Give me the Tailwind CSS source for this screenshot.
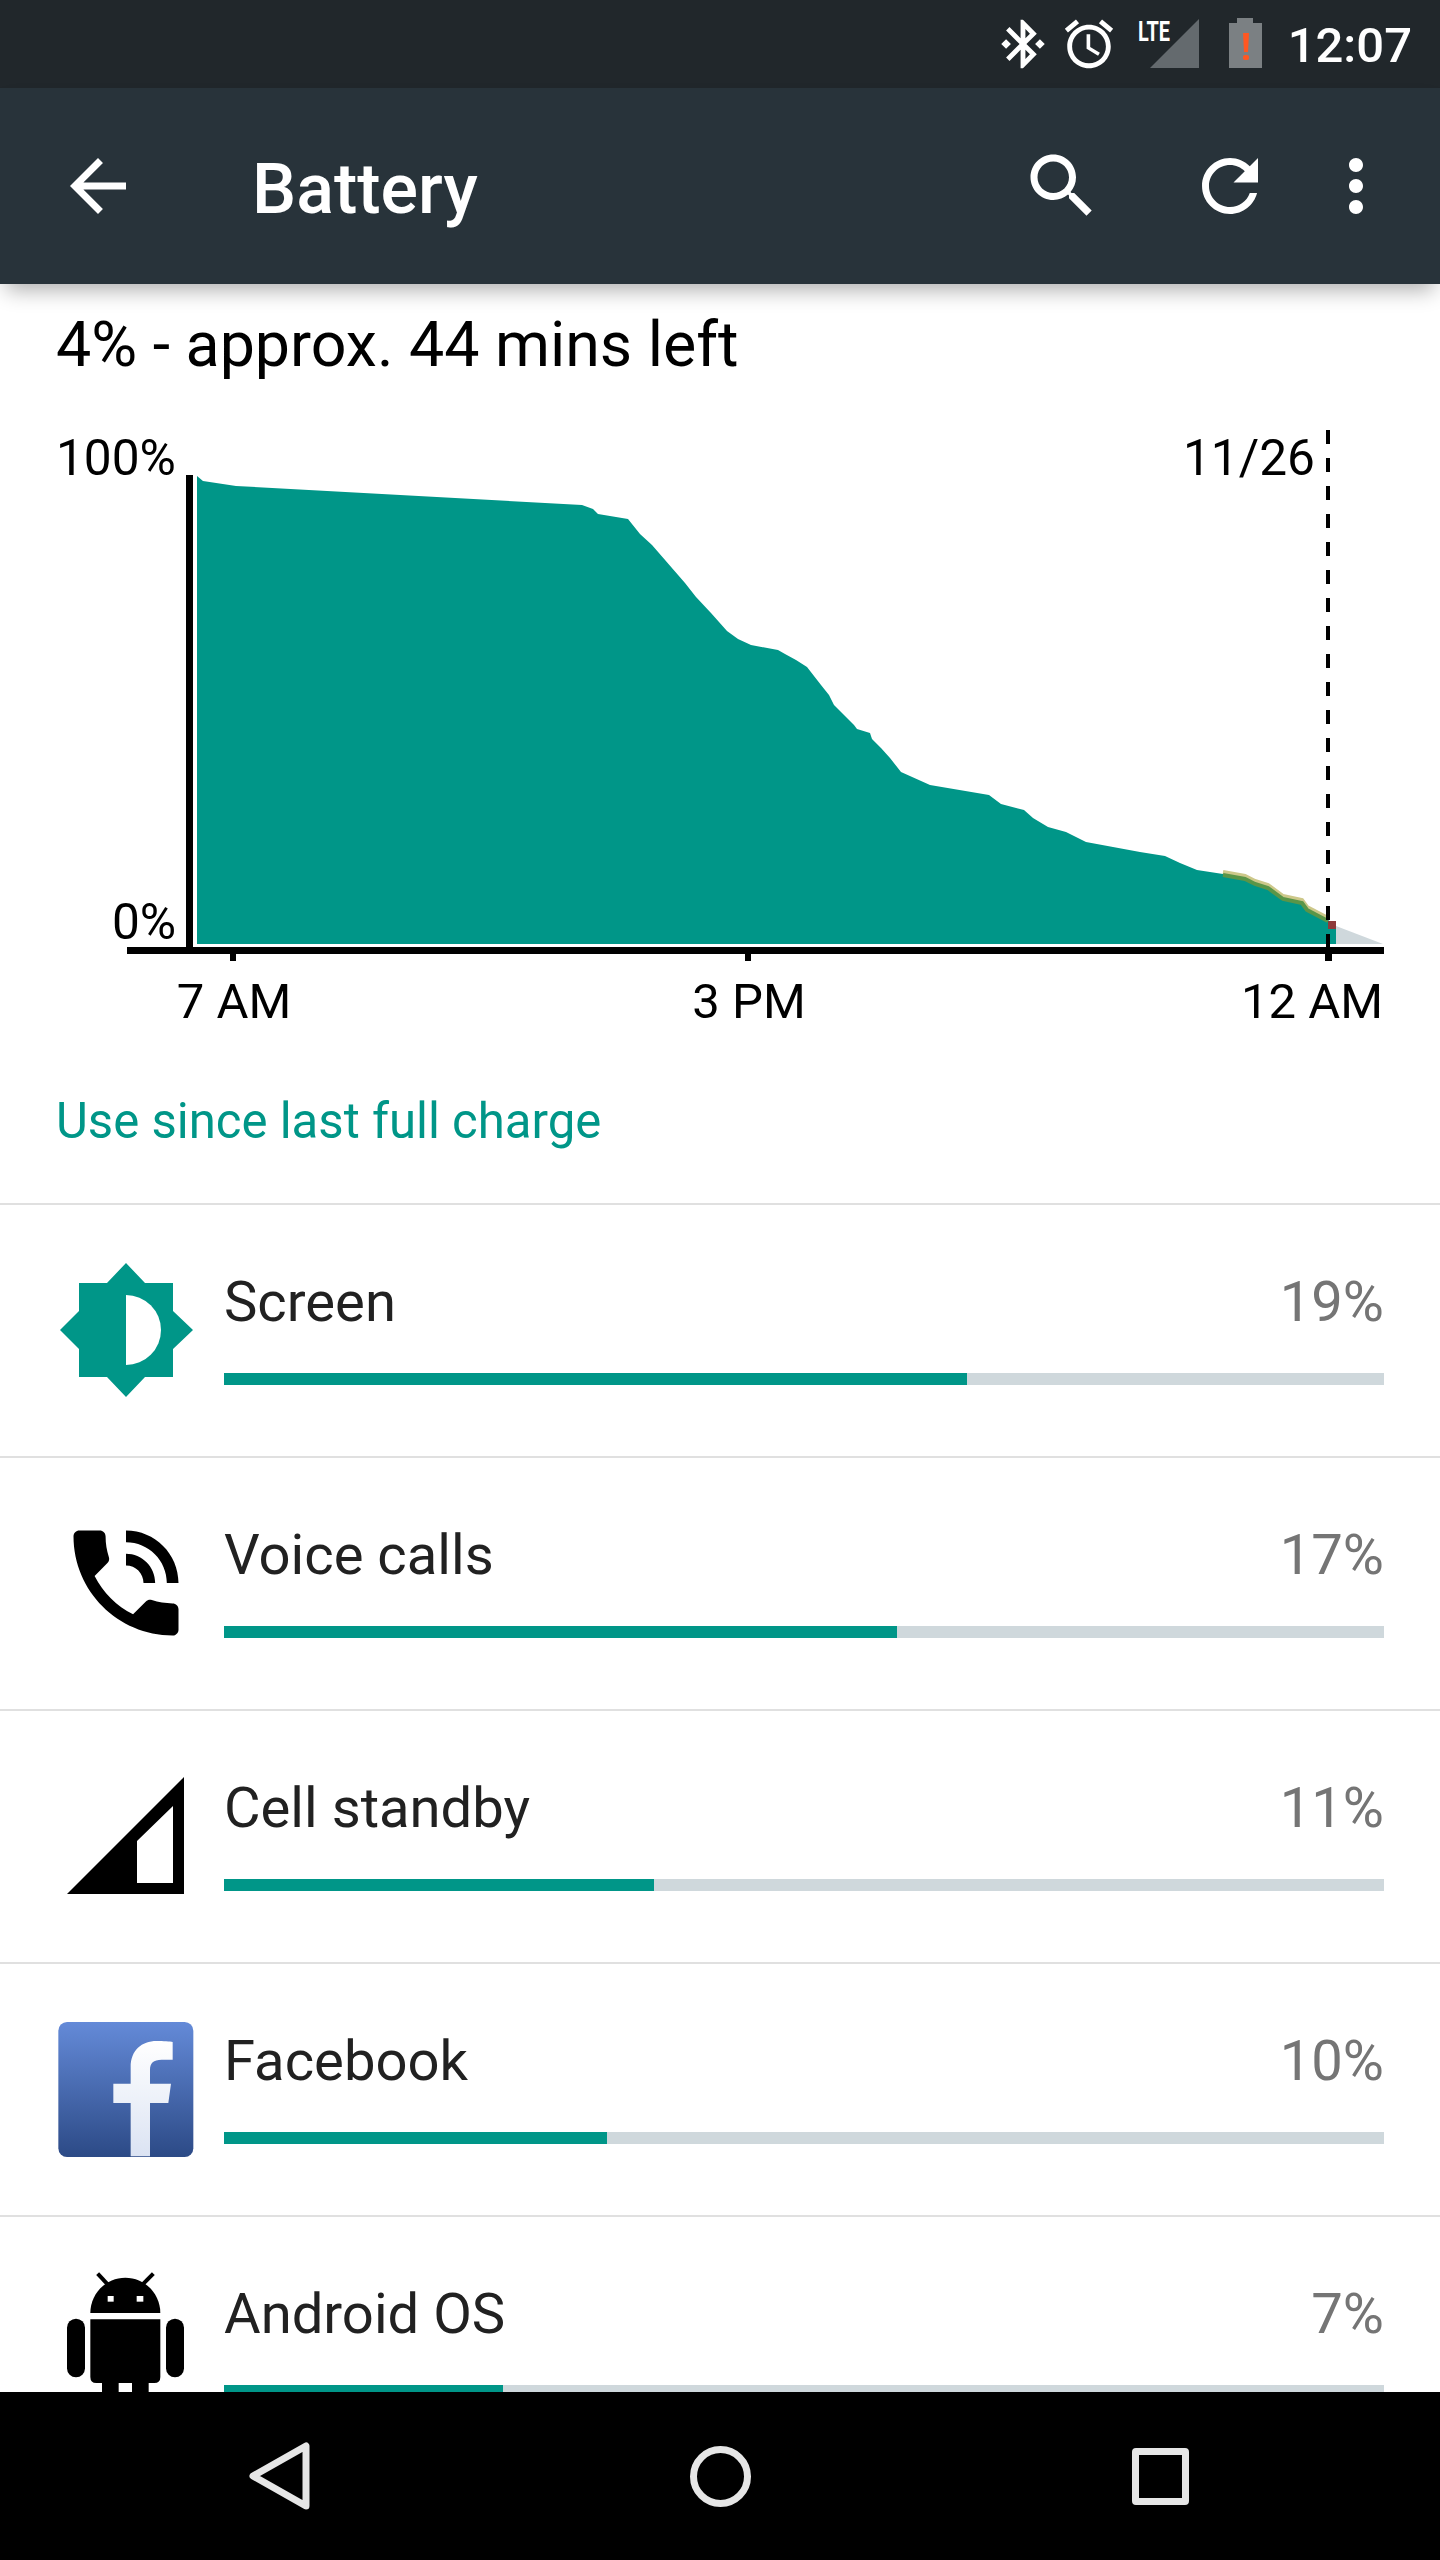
<!DOCTYPE html>
<html lang="en">
<head>
    <meta charset="UTF-8">
    <meta name="viewport" content="width=device-width, initial-scale=1.0">
    <title>Battery</title>
    <script src="https://cdn.jsdelivr.net/npm/@tailwindcss/browser@4"></script>
</head>
<body class="bg-white font-[Roboto,sans-serif]">
    <div class="w-[1440px] h-[2560px] flex flex-col overflow-hidden">

        <!-- status bar -->
        <div class="h-[88px] shrink-0 bg-[#21272b] relative">
            <svg class="absolute left-[994px] top-[15px] w-[58px] h-[58px]" viewBox="0 0 24 24" fill="#fff"><path d="M7 12l-2-2-2 2 2 2 2-2zm10.71-4.29L12 2h-1v7.59L6.41 5 5 6.41 10.59 12 5 17.59 6.41 19 11 14.41V22h1l5.71-5.71-4.3-4.29 4.3-4.29zM13 5.83l1.88 1.88L13 9.59V5.83zm1.88 10.46L13 18.17v-3.76l1.88 1.88zM19 10l-2 2 2 2 2-2-2-2z"/></svg>
            <svg class="absolute left-[1060px] top-[15px] w-[58px] h-[58px]" viewBox="0 0 24 24" fill="#fff"><path d="M22 5.72l-4.6-3.86-1.29 1.53 4.6 3.86L22 5.72zM7.88 3.39L6.6 1.86 2 5.71l1.29 1.53 4.59-3.85zM12.5 8H11v6l4.75 2.85.75-1.23-4-2.37V8zM12 4c-4.97 0-9 4.03-9 9s4.02 9 9 9c4.97 0 9-4.03 9-9s-4.03-9-9-9zm0 16c-3.87 0-7-3.13-7-7s3.13-7 7-7 7 3.13 7 7-3.13 7-7 7z"/></svg>
            <svg class="absolute left-[1130px] top-[10px] w-[140px] h-[70px]" viewBox="1130 10 140 70">
                <polygon points="1199,19 1199,68 1150,68" fill="#646a6e"/>
                <text x="1138" y="41" font-size="28" font-weight="700" fill="#fff" textLength="32" lengthAdjust="spacingAndGlyphs">LTE</text>
                <path d="M1237 18h16v5h9v45h-33V23h8z" fill="#7b8083"/>
                <path d="M1243 33h6l-1 19h-4z" fill="#ff5722"/>
                <rect x="1243" y="55" width="6" height="5" rx="2" fill="#ff5722"/>
            </svg>
            <span class="absolute right-[28px] top-[17px] text-[49px] leading-[58px] font-medium text-white">12:07</span>
        </div>

        <!-- app bar -->
        <div class="h-[196px] shrink-0 bg-[#28333a] flex items-center pl-[56px] pr-[42px] relative z-10 shadow-[0_12px_20px_-6px_rgba(0,0,0,0.32)]">
            <svg class="w-[84px] h-[84px]" viewBox="0 0 24 24" fill="#fff"><path d="M20 11H7.83l5.59-5.59L12 4l-8 8 8 8 1.41-1.41L7.83 13H20v-2z"/></svg>
            <h1 class="ml-[112px] mt-[6px] flex-1 text-[70px] font-medium text-white">Battery</h1>
            <svg class="w-[84px] h-[84px]" viewBox="0 0 24 24" fill="#fff"><path d="M15.5 14h-.79l-.28-.27C15.41 12.59 16 11.11 16 9.5 16 5.91 13.09 3 9.5 3S3 5.91 3 9.5 5.91 16 9.5 16c1.61 0 3.09-.59 4.23-1.57l.27.28v.79l5 4.99L20.49 19l-4.99-5zm-6 0C7.01 14 5 11.99 5 9.5S7.01 5 9.5 5 14 7.01 14 9.5 11.99 14 9.5 14z"/></svg>
            <svg class="ml-[84px] w-[84px] h-[84px]" viewBox="0 0 24 24" fill="#fff"><path d="M17.65 6.35C16.2 4.9 14.21 4 12 4c-4.42 0-7.99 3.58-7.99 8s3.57 8 7.99 8c3.73 0 6.84-2.55 7.73-6h-2.08c-.82 2.33-3.04 4-5.65 4-3.31 0-6-2.69-6-6s2.69-6 6-6c1.66 0 3.14.69 4.22 1.78L13 11h7V4l-2.35 2.35z"/></svg>
            <svg class="ml-[42px] w-[84px] h-[84px]" viewBox="0 0 24 24" fill="#fff"><path d="M12 8c1.1 0 2-.9 2-2s-.9-2-2-2-2 .9-2 2 .9 2 2 2zm0 2c-1.1 0-2 .9-2 2s.9 2 2 2 2-.9 2-2-.9-2-2-2zm0 6c-1.1 0-2 .9-2 2s.9 2 2 2 2-.9 2-2-.9-2-2-2z"/></svg>
        </div>

        <main class="flex-1 overflow-hidden">
            <div class="h-[146px] pt-[24px] px-[56px] text-[62.7px] leading-[73px] text-black">4% - approx. 44 mins left</div>

            <!-- chart, viewBox uses page coordinates -->
            <svg class="block w-[1440px] h-[610px]" viewBox="0 430 1440 610">
                <polygon points="1336,926 1383,944 1336,944" fill="#cfd8dc"/>
                <polygon fill="#009688" points="197,476 203,481 236,486 582,505 593,509 598,514 628,519 640,534 652,545 685,583 696,597 711,613 727,631 738,639 751,645 778,650 785,654 796,660 807,667 821,685 829,695 834,705 854,725 857,729 870,733 872,739 881,748 890,758 901,772 930,785 989,795 1001,804 1024,810 1033,818 1048,827 1066,832 1086,842 1140,852 1165,856 1180,863 1197,870 1223,874 1245,878 1255,883 1268,887 1283,898 1302,902 1307,909 1328,920 1336,926 1336,944 197,944"/>
                <polyline fill="none" stroke="#cdc88a" stroke-width="4" points="1223,872 1245,876 1255,881 1268,885 1283,896 1302,900 1307,907 1328,918"/>
                <polyline fill="none" stroke="#5a9548" stroke-width="4" points="1223,875 1245,879 1255,884 1268,888 1283,899 1302,903 1307,910 1328,921"/>
                <rect x="1328" y="921" width="8" height="8" fill="#8e3a3a"/>
                <rect x="186" y="475" width="7" height="473" fill="#000"/>
                <rect x="127" y="947" width="1257" height="7" fill="#000"/>
                <line x1="1328" y1="430" x2="1328" y2="948" stroke="#000" stroke-width="4" stroke-dasharray="14 14"/>
                <rect x="230" y="954" width="6" height="7" fill="#000"/>
                <rect x="745" y="954" width="6" height="7" fill="#000"/>
                <rect x="1325" y="954" width="7" height="7" fill="#000"/>
                <g font-size="49.6" fill="#000">
                    <text x="56" y="475">100%</text>
                    <text x="112" y="939">0%</text>
                    <text x="1183" y="475">11/26</text>
                </g>
                <g font-size="49" fill="#000">
                    <text x="234" y="1018" text-anchor="middle">7 AM</text>
                    <text x="749" y="1018" text-anchor="middle">3 PM</text>
                    <text x="1383" y="1018" text-anchor="end">12 AM</text>
                </g>
            </svg>

            <div class="h-[165px] pt-[50px] px-[56px] border-b-2 border-[#e0e0e0] text-[49.1px] leading-[62px] text-[#009688]">Use since last full charge</div>

            <!-- Screen -->
            <div class="h-[253px] border-b-2 border-[#e0e0e0] flex items-start pl-[56px] pr-[56px] pt-[55px]">
                <svg class="w-[140px] h-[140px] shrink-0" viewBox="0 0 140 140">
                    <polygon fill="#009688" points="70,3 89,23 117,23 117,51 137,70 117,89 117,117 89,117 70,137 51,117 23,117 23,89 4,70 23,51 23,23 51,23"/>
                    <path d="M70 35A35 35 0 0 1 70 105Z" fill="#fff"/>
                </svg>
                <div class="ml-[28px] flex-1 mt-[10px]">
                    <div class="flex justify-between text-[56.2px] leading-[64px]"><span class="text-[#212121]">Screen</span><span class="text-[#757575]">19%</span></div>
                    <div class="mt-[39px] h-[12px] bg-[#cfd8dc]"><div class="h-full w-[743px] bg-[#009688]"></div></div>
                </div>
            </div>

            <!-- Voice calls -->
            <div class="h-[253px] border-b-2 border-[#e0e0e0] flex items-start pl-[56px] pr-[56px] pt-[55px]">
                <svg class="w-[140px] h-[140px] shrink-0" viewBox="0 0 24 24" fill="#000"><path d="M20 15.5c-1.25 0-2.45-.2-3.57-.57-.35-.11-.74-.03-1.02.24l-2.2 2.2c-2.83-1.44-5.15-3.75-6.59-6.59l2.2-2.21c.28-.26.36-.65.25-1-.37-1.12-.57-2.32-.57-3.57 0-.55-.45-1-1-1H4c-.55 0-1 .45-1 1 0 9.39 7.61 17 17 17 .55 0 1-.45 1-1V16.5c0-.55-.45-1-1-1zM19 12h2c0-4.97-4.03-9-9-9v2c3.87 0 7 3.13 7 7zm-4 0h2c0-2.76-2.24-5-5-5v2c1.66 0 3 1.34 3 3z"/></svg>
                <div class="ml-[28px] flex-1 mt-[10px]">
                    <div class="flex justify-between text-[56.2px] leading-[64px]"><span class="text-[#212121]">Voice calls</span><span class="text-[#757575]">17%</span></div>
                    <div class="mt-[39px] h-[12px] bg-[#cfd8dc]"><div class="h-full w-[673px] bg-[#009688]"></div></div>
                </div>
            </div>

            <!-- Cell standby -->
            <div class="h-[253px] border-b-2 border-[#e0e0e0] flex items-start pl-[56px] pr-[56px] pt-[55px]">
                <svg class="w-[140px] h-[140px] shrink-0" viewBox="0 0 140 140">
                    <path fill="#000" fill-rule="evenodd" d="M128 11V128H11ZM117 117H81V75L117 40Z"/>
                </svg>
                <div class="ml-[28px] flex-1 mt-[10px]">
                    <div class="flex justify-between text-[56.2px] leading-[64px]"><span class="text-[#212121]">Cell standby</span><span class="text-[#757575]">11%</span></div>
                    <div class="mt-[39px] h-[12px] bg-[#cfd8dc]"><div class="h-full w-[430px] bg-[#009688]"></div></div>
                </div>
            </div>

            <!-- Facebook -->
            <div class="h-[253px] border-b-2 border-[#e0e0e0] flex items-start pl-[56px] pr-[56px] pt-[55px]">
                <svg class="w-[140px] h-[140px] shrink-0" viewBox="149 188 420 420">
                    <defs>
                        <linearGradient id="fb-bg" x1="0" y1="0" x2="0" y2="1"><stop offset="0" stop-color="#648ad8"/><stop offset="1" stop-color="#2c4a86"/></linearGradient>
                        <linearGradient id="fb-f" x1="0" y1="0" x2="0" y2="1"><stop offset="0" stop-color="#ffffff"/><stop offset="1" stop-color="#dbe3f3"/></linearGradient>
                    </defs>
                    <rect x="156" y="197" width="405" height="405" rx="26" fill="url(#fb-bg)"/>
                    <path fill="url(#fb-f)" d="M373 600V440H321V382H373V332C373 282 406 254 451 254C471 254 491 255 499 257V310H466C441 310 431 320 431 340V382H494L486 440H431V600Z"/>
                </svg>
                <div class="ml-[28px] flex-1 mt-[10px]">
                    <div class="flex justify-between text-[56.2px] leading-[64px]"><span class="text-[#212121]">Facebook</span><span class="text-[#757575]">10%</span></div>
                    <div class="mt-[39px] h-[12px] bg-[#cfd8dc]"><div class="h-full w-[383px] bg-[#009688]"></div></div>
                </div>
            </div>

            <!-- Android OS, cut off by the nav bar -->
            <div class="h-[253px] flex items-start pl-[56px] pr-[56px] pt-[55px]">
                <svg class="w-[140px] h-[140px] shrink-0" viewBox="170 965 420 420" fill="#000">
                    <path d="M273 1088C273 1030 320 982 378 982C436 982 483 1030 483 1088Z"/>
                    <line x1="295" y1="970" x2="325" y2="1002" stroke="#000" stroke-width="12"/>
                    <line x1="462" y1="970" x2="430" y2="1002" stroke="#000" stroke-width="12"/>
                    <rect x="325" y="1037" width="18" height="17" fill="#fff"/>
                    <rect x="412" y="1037" width="20" height="17" fill="#fff"/>
                    <path d="M273 1107H483V1280Q483 1298 465 1298H448V1385H398V1298H358V1385H308V1298H291Q273 1298 273 1280Z"/>
                    <rect x="203" y="1105" width="54" height="176" rx="27"/>
                    <rect x="500" y="1105" width="54" height="176" rx="27"/>
                </svg>
                <div class="ml-[28px] flex-1 mt-[10px]">
                    <div class="flex justify-between text-[56.2px] leading-[64px]"><span class="text-[#212121]">Android OS</span><span class="text-[#757575]">7%</span></div>
                    <div class="mt-[39px] h-[12px] bg-[#cfd8dc]"><div class="h-full w-[279px] bg-[#009688]"></div></div>
                </div>
            </div>
        </main>

        <!-- nav bar -->
        <div class="h-[168px] shrink-0 bg-black flex items-center justify-center">
            <div class="w-[440px] flex justify-center">
                <svg class="w-[70px] h-[70px]" viewBox="0 0 70 70" fill="none" stroke="#e6e6e6" stroke-width="7" stroke-linejoin="round"><path d="M61 5V65L8 35Z"/></svg>
            </div>
            <div class="w-[440px] flex justify-center">
                <div class="w-[61px] h-[61px] rounded-full border-[7px] border-[#e6e6e6]"></div>
            </div>
            <div class="w-[440px] flex justify-center">
                <div class="w-[57px] h-[57px] rounded-[4px] border-[7px] border-[#e6e6e6]"></div>
            </div>
        </div>
    </div>
</body>
</html>
